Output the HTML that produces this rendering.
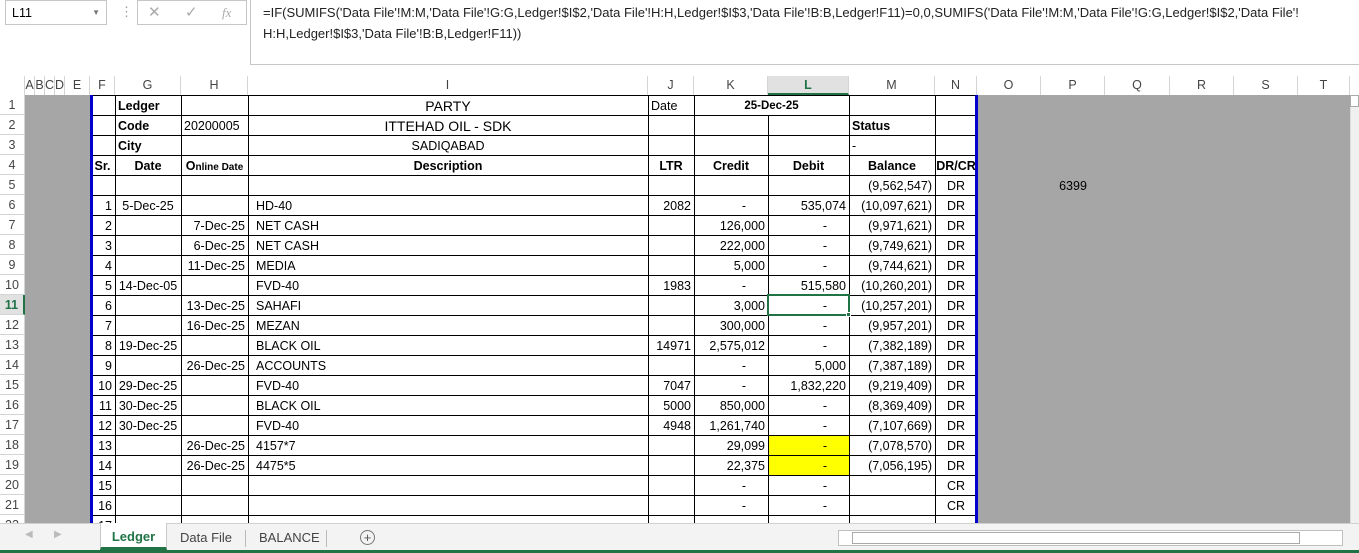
<!DOCTYPE html>
<html><head><meta charset="utf-8"><style>
body{margin:0;width:1359px;height:553px;overflow:hidden;background:#fff;font-family:"Liberation Sans",sans-serif;position:relative}
.a{position:absolute;box-sizing:border-box}
.c{position:absolute;box-sizing:border-box;font-size:12.5px;line-height:19px;padding-top:2px;white-space:nowrap;overflow:visible;padding-left:3px;padding-right:3px;color:#000}
.ch{position:absolute;top:76px;height:19px;font-size:12.5px;line-height:19px;text-align:center;color:#444;border-right:1px solid #d4d4d4;box-sizing:border-box;background:#fff}
.rh{position:absolute;left:0;width:25px;height:20px;font-size:12.5px;line-height:21px;text-align:center;color:#444;border-bottom:1px solid #d4d4d4;box-sizing:border-box;background:#fff}
</style></head><body>
<div class="a" style="left:5px;top:0;width:102px;height:25px;border:1px solid #c6c6c6;font-size:12.5px;line-height:24px;padding-left:6px">L11<span style="position:absolute;right:6px;top:0;font-size:8px;color:#777">▼</span></div>
<div class="a" style="left:120px;top:4px;color:#999;font-size:13px">⋮</div>
<div class="a" style="left:137px;top:0;width:110px;height:25px;border:1px solid #c6c6c6;color:#aaa;font-size:15px;line-height:24px"><span style="position:absolute;left:10px">✕</span><span style="position:absolute;left:47px">✓</span><span style="position:absolute;left:84px;font-style:italic;font-family:'Liberation Serif';font-size:13px">fx</span></div>
<div class="a" style="left:250px;top:0;width:1109px;height:65px;border:1px solid #c6c6c6;border-top:none;border-right:none;font-size:13px;line-height:21px;padding:2px 0 0 12px;color:#222">=IF(SUMIFS('Data File'!M:M,'Data File'!G:G,Ledger!$I$2,'Data File'!H:H,Ledger!$I$3,'Data File'!B:B,Ledger!F11)=0,0,SUMIFS('Data File'!M:M,'Data File'!G:G,Ledger!$I$2,'Data File'!<br>H:H,Ledger!$I$3,'Data File'!B:B,Ledger!F11))</div>
<div id="g"></div>
<div class="a" style="left:0;top:523px;width:1359px;height:30px;background:#f3f3f3;border-top:1px solid #d0d0d0"></div>
<div class="a" style="left:0;top:550px;width:1359px;height:3px;background:#217346"></div>
<div class="a" style="left:25px;top:529px;color:#bbb;font-size:10px">◀</div>
<div class="a" style="left:54px;top:529px;color:#bbb;font-size:10px">▶</div>
<div class="a" style="left:100px;top:523px;width:67px;height:27px;background:#fff;border:1px solid #c8c8c8;border-top:none;border-bottom:3px solid #217346;color:#217346;font-weight:bold;font-size:13px;text-align:center;line-height:27px">Ledger</div>
<div class="a" style="left:180px;top:530px;font-size:13px;color:#444">Data File</div>
<div class="a" style="left:245px;top:530px;width:1px;height:17px;background:#bbb"></div>
<div class="a" style="left:259px;top:530px;font-size:13px;color:#444">BALANCE</div>
<div class="a" style="left:326px;top:530px;width:1px;height:17px;background:#bbb"></div>
<div class="a" style="left:360px;top:530px;width:15px;height:15px;border:1px solid #777;border-radius:50%;font-size:13px;line-height:13px;text-align:center;color:#555">+</div>
<div class="a" style="left:838px;top:530px;width:505px;height:16px;border:1px solid #c0c0c0;background:#fff"></div>
<div class="a" style="left:852px;top:532px;width:448px;height:12px;border:1px solid #aaa;background:#fff"></div>
<div class="a" style="left:1350px;top:95px;width:9px;height:428px;background:#f0f0f0;border-left:1px solid #ddd"></div>
<div class="a" style="left:1350px;top:95px;width:9px;height:12px;border:1px solid #aaa;background:#fff"></div>
<script>
var g=document.getElementById('g'),h='';
function A(s){h+=s}
var cols=[['',0,25],['A',25,35],['B',35,45],['C',45,55],['D',55,65],['E',65,90],['F',90,115],['G',115,181],['H',181,248],['I',248,648],['J',648,694],['K',694,768],['L',768,849],['M',849,935],['N',935,977],['O',977,1041],['P',1041,1105],['Q',1105,1170],['R',1170,1234],['S',1234,1298],['T',1298,1350]];
var X={};cols.forEach(function(c){X[c[0]]=[c[1],c[2]]});
A('<div class="a" style="left:0;top:76px;width:1350px;height:19px;background:#fff;border-bottom:1px solid #aaa"></div>');
cols.forEach(function(c){var st=c[0]=='L'?'background:#e1e1e1;color:#217346;font-weight:bold;border-bottom:2px solid #217346;':'';A('<div class="ch" style="left:'+c[1]+'px;width:'+(c[2]-c[1])+'px;'+st+'">'+c[0]+'</div>')});
A('<div class="a" style="left:25px;top:95px;width:65px;height:428px;background:#a6a6a6"></div>');
A('<div class="a" style="left:977px;top:95px;width:373px;height:428px;background:#a6a6a6"></div>');
for(var r=1;r<=22;r++){var y=95+(r-1)*20;A('<div class="rh" style="top:'+y+'px;'+(r==11?'background:#e1e1e1;color:#217346;font-weight:bold;border-right:2px solid #217346;':'border-right:1px solid #d4d4d4;')+'">'+r+'</div>')}
A('<div class="a" style="left:768px;top:435px;width:81px;height:40px;background:#ffff00"></div>');
for(var r=0;r<=22;r++){var y=95+r*20;A('<div class="a" style="left:90px;top:'+y+'px;width:887px;height:1px;background:#000"></div>')}
['G','H','I','J','K','L','M','N'].forEach(function(k){var x=X[k][0];if(k=='L'){A('<div class="a" style="left:'+x+'px;top:115px;width:1px;height:408px;background:#000"></div>')}else A('<div class="a" style="left:'+x+'px;top:95px;width:1px;height:428px;background:#000"></div>')});
A('<div class="a" style="left:90px;top:95px;width:3px;height:428px;background:#0000cc"></div>');
A('<div class="a" style="left:975px;top:95px;width:3px;height:428px;background:#0000cc"></div>');
A('<div class="a" style="left:767px;top:294px;width:83px;height:22px;border:2px solid #217346"></div><div class="a" style="left:846px;top:312px;width:5px;height:5px;background:#217346;border:1px solid #fff"></div>');
function C(col,r,t,al,st){var x=X[col];var y=95+(r-1)*20;A('<div class="c" style="left:'+x[0]+'px;width:'+(x[1]-x[0])+'px;top:'+y+'px;text-align:'+(al||'left')+';'+(st||'')+'">'+t+'</div>')}
C('G',1,'Ledger','left','font-weight:bold');C('I',1,'PARTY','center','font-size:14px');C('J',1,'Date');
A('<div class="c" style="left:694px;width:155px;top:95px;text-align:center;font-weight:bold;font-size:11.5px">25-Dec-25</div>');
C('G',2,'Code','left','font-weight:bold');C('H',2,'20200005');C('I',2,'ITTEHAD OIL - SDK','center','font-size:14px');C('M',2,'Status','left','font-weight:bold');
C('G',3,'City','left','font-weight:bold');C('I',3,'SADIQABAD','center');C('M',3,'-');
C('F',4,'Sr.','center','font-weight:bold;padding-left:0;padding-right:0');C('G',4,'Date','center','font-weight:bold');C('H',4,'O<span style="font-size:10px">nline Date</span>','center','font-weight:bold;padding-left:0;padding-right:0');C('I',4,'Description','center','font-weight:bold');C('J',4,'LTR','center','font-weight:bold');C('K',4,'Credit','center','font-weight:bold');C('L',4,'Debit','center','font-weight:bold');C('M',4,'Balance','center','font-weight:bold');C('N',4,'DR/CR','center','font-weight:bold;padding-left:0;padding-right:0');
C('M',5,'(9,562,547)','right');C('N',5,'DR','center');C('P',5,'6399','center');
var d=[['5-Dec-25','','HD-40','2082','-','535,074','(10,097,621)'],['','7-Dec-25','NET CASH','','126,000','-','(9,971,621)'],['','6-Dec-25','NET CASH','','222,000','-','(9,749,621)'],['','11-Dec-25','MEDIA','','5,000','-','(9,744,621)'],['14-Dec-05','','FVD-40','1983','-','515,580','(10,260,201)'],['','13-Dec-25','SAHAFI','','3,000','-','(10,257,201)'],['','16-Dec-25','MEZAN','','300,000','-','(9,957,201)'],['19-Dec-25','','BLACK OIL','14971','2,575,012','-','(7,382,189)'],['','26-Dec-25','ACCOUNTS','','-','5,000','(7,387,189)'],['29-Dec-25','','FVD-40','7047','-','1,832,220','(9,219,409)'],['30-Dec-25','','BLACK OIL','5000','850,000','-','(8,369,409)'],['30-Dec-25','','FVD-40','4948','1,261,740','-','(7,107,669)'],['','26-Dec-25','4157*7','','29,099','-','(7,078,570)'],['','26-Dec-25','4475*5','','22,375','-','(7,056,195)'],['','','','','-','-',''],['','','','','-','-','']];
d.forEach(function(e,i){var r=6+i;C('F',r,''+(i+1),'right');C('G',r,e[0],'center');C('H',r,e[1],'right');C('I',r,e[2],'left','padding-left:8px');C('J',r,e[3],'right');
function dash(col,v){if(v=='-')C(col,r,'-','right','padding-right:22px');else C(col,r,v,'right')}
dash('K',e[4]);dash('L',e[5]);C('M',r,e[6],'right');C('N',r,i>=14?'CR':'DR','center')});
C('F',22,'17','right');
g.innerHTML=h;
</script>
</body></html>
